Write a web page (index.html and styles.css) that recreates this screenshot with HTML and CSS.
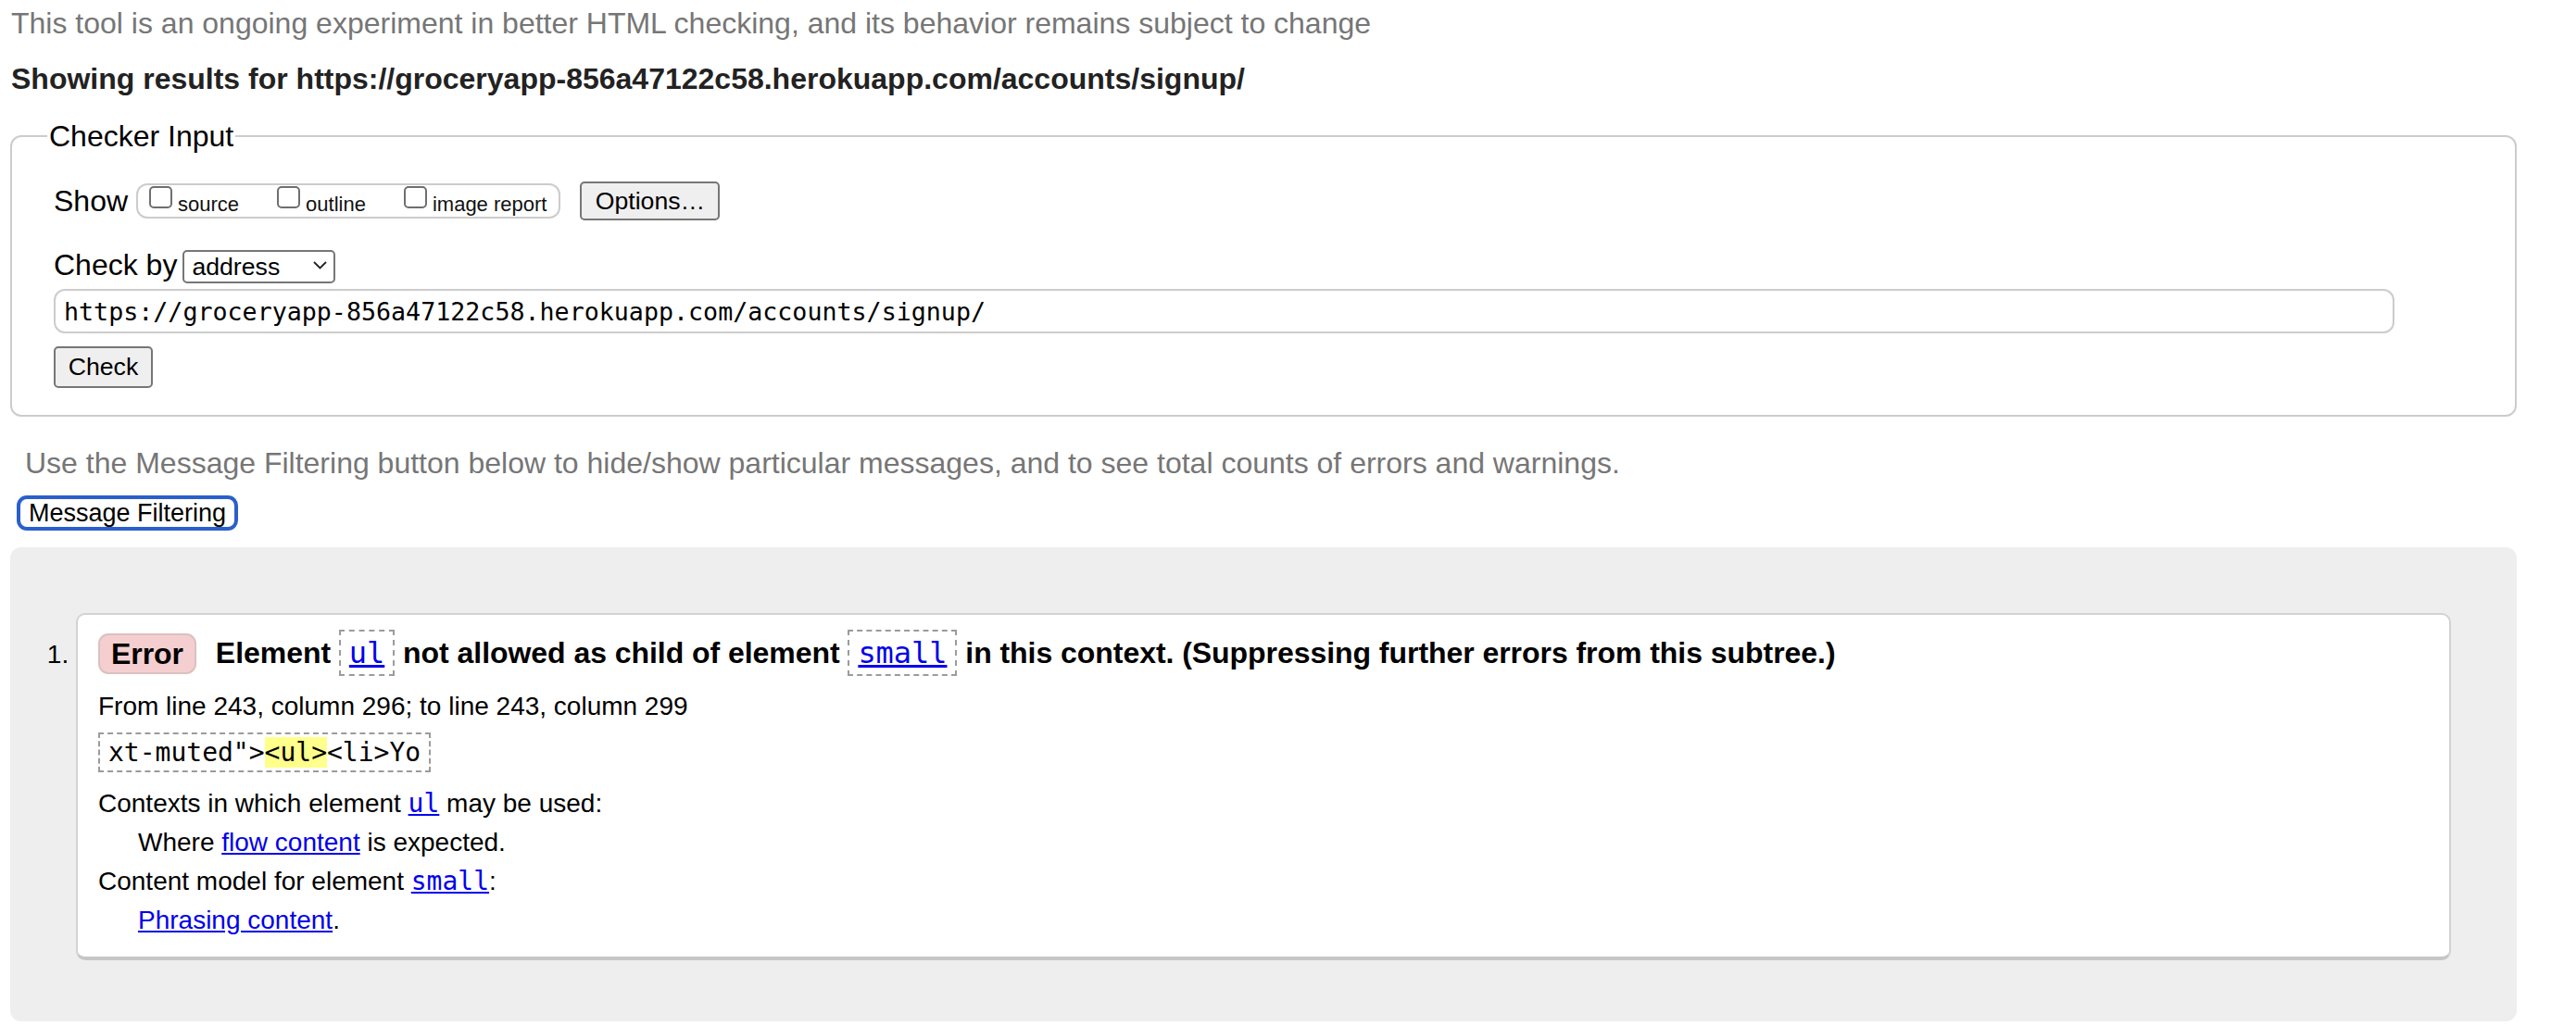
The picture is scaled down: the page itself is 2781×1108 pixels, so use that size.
FILE: index.html
```html
<!DOCTYPE html>
<html lang="en">
<head>
<meta charset="utf-8">
<title>Nu Html Checker</title>
<link rel="stylesheet" href="styles.css">
</head>
<body>
<p class="intro">This tool is an ongoing experiment in better HTML checking, and its behavior remains subject to change</p>
<h2 class="title">Showing results for https://groceryapp-856a47122c58.herokuapp.com/accounts/signup/</h2>
<form class="checker">
  <fieldset class="panel">
    <legend class="panel-legend">Checker Input</legend>
    <div class="row row-show">
      <span class="row-label">Show</span>
      <span class="opts">
        <label class="opt"><input class="cb" type="checkbox"><span>source</span></label>
        <label class="opt"><input class="cb" type="checkbox"><span>outline</span></label>
        <label class="opt"><input class="cb" type="checkbox"><span>image report</span></label>
      </span>
      <button type="button" class="btn btn-options">Options…</button>
    </div>
    <div class="row row-by">
      <span class="row-label">Check by</span>
      <span class="select-wrap">
        <select class="select"><option>address</option></select>
        <svg class="chev" width="15" height="9" viewBox="0 0 15 9"><path d="M1 1 L7.5 7.5 L14 1" fill="none" stroke="#222" stroke-width="1.8"/></svg>
      </span>
    </div>
    <input class="url" type="text" value="https://groceryapp-856a47122c58.herokuapp.com/accounts/signup/">
    <button type="button" class="btn btn-check">Check</button>
  </fieldset>
</form>
<p class="hint">Use the Message Filtering button below to hide/show particular messages, and to see total counts of errors and warnings.</p>
<button type="button" class="btn-filter">Message Filtering</button>
<div class="results">
  <ol class="msgs">
    <li class="msg">
      <p class="msg-head"><span class="badge">Error</span> Element <code class="tok"><a href="#">ul</a></code> not allowed as child of element <code class="tok"><a href="#">small</a></code> in this context. (Suppressing further errors from this subtree.)</p>
      <p class="loc">From line 243, column 296; to line 243, column 299</p>
      <p class="extract"><code>xt-muted"&gt;<b class="hl">&lt;ul&gt;</b>&lt;li&gt;Yo</code></p>
      <dl class="details">
        <dt>Contexts in which element <a href="#"><code>ul</code></a> may be used:</dt>
        <dd>Where <a href="#">flow content</a> is expected.</dd>
        <dt>Content model for element <a href="#"><code>small</code></a>:</dt>
        <dd><a href="#">Phrasing content</a>.</dd>
      </dl>
    </li>
  </ol>
</div>
</body>
</html>
```
FILE: styles.css
```css
* { box-sizing: border-box; }

html { background: #fff; }

body {
  margin: 0;
  padding: 0 0 8px 11px;
  width: 2781px;
  font-family: "Liberation Sans", Arial, Helvetica, sans-serif;
  font-size: 32px;
  color: #000;
}

.intro {
  margin: 5px 0 0 1px;
  line-height: 40px;
  color: #767676;
}

.title {
  margin: 20px 0 0 1px;
  font-size: 32px;
  line-height: 40px;
  font-weight: bold;
  color: #222;
}

.checker { margin: 22px 0 0 0; }

.panel {
  width: 2706px;
  margin: 0;
  min-width: 0;
  border: 2px solid #cccccc;
  border-radius: 12px;
  padding: 28px 45px 29px 45px;
}

.panel-legend {
  margin-left: -7px;
  padding: 0 2px;
  line-height: 40px;
  font-size: 32px;
  color: #000;
}

.row {
  display: flex;
  align-items: center;
}

.row-show { height: 44px; }

.row-by {
  height: 40px;
  margin-top: 27px;
}

.row-label { line-height: 40px; white-space: nowrap; }

.opts {
  display: flex;
  align-items: flex-end;
  flex: none;
  margin-left: 9px;
  height: 38px;
  padding: 0 13px 0 12px;
  border: 2px solid #cccccc;
  border-radius: 12px;
  gap: 41px;
}

.opt {
  display: flex;
  align-items: flex-end;
  flex: none;
  white-space: nowrap;
  font-size: 22px;
  line-height: 26px;
  color: #111;
}

.cb {
  appearance: none;
  -webkit-appearance: none;
  flex: none;
  width: 25px;
  height: 24px;
  margin: 0 6px 9px 0;
  border: 2px solid #6f6f6f;
  border-radius: 5px;
  background: #fff;
}

.btn {
  font-family: "Liberation Sans", Arial, sans-serif;
  font-size: 26.67px;
  color: #000;
  background: #efefef;
  border: 2px solid #767676;
  border-radius: 5px;
  padding: 0 12px;
}

.btn-options {
  flex: none;
  margin-left: 21px;
  width: 151px;
  height: 42px;
}

.select-wrap {
  position: relative;
  display: inline-block;
  margin-left: 6px;
  height: 36px;
}

.select {
  appearance: none;
  -webkit-appearance: none;
  width: 165px;
  height: 36px;
  padding: 0 0 0 8px;
  font-family: "Liberation Sans", Arial, sans-serif;
  font-size: 26.67px;
  color: #000;
  background: #fff;
  border: 2px solid #767676;
  border-radius: 5px;
}

.chev {
  position: absolute;
  left: 141px;
  top: 14px;
  pointer-events: none;
}

.url {
  display: block;
  margin-top: 6px;
  width: 2527px;
  height: 48px;
  padding: 0 9px;
  font-family: "DejaVu Sans Mono", Menlo, monospace;
  font-size: 26.67px;
  color: #000;
  border: 2px solid #cccccc;
  border-radius: 12px;
  background: #fff;
}

.btn-check {
  display: block;
  margin-top: 14px;
  width: 107px;
  height: 45px;
}

.hint {
  margin: 30px 0 0 16px;
  line-height: 40px;
  color: #767676;
}

.btn-filter {
  display: block;
  margin: 15px 0 0 7px;
  height: 38px;
  width: 239px;
  padding: 0;
  font-family: "Liberation Sans", Arial, sans-serif;
  font-size: 27px;
  color: #000;
  background: #fff;
  border: 4px solid #2b5fcb;
  border-radius: 11px;
}

.results {
  margin-top: 18px;
  width: 2706px;
  background: #eeeeee;
  border-radius: 12px;
  padding: 71px 71px 66px 71px;
}

.msgs {
  margin: 0;
  padding: 0;
  list-style: decimal outside;
  font-size: 28px;
}

.msg {
  background: #fff;
  border: 2px solid #d2d2d2;
  border-bottom: 4px solid #c6c6c6;
  border-radius: 10px;
  padding: 15px 22px 21px 22px;
}

.msg-head {
  margin: 0;
  font-size: 32px;
  line-height: 52px;
  font-weight: bold;
  letter-spacing: -0.05px;
}

.badge {
  display: inline-block;
  height: 44px;
  line-height: 40px;
  padding: 0 12px;
  margin-right: 12px;
  background: #f5cfcf;
  border: 2px solid #dcc0c0;
  border-radius: 11px;
  vertical-align: middle;
  position: relative;
  top: -2px;
}

.tok {
  display: inline-block;
  height: 50px;
  line-height: 46px;
  padding: 0 9px;
  border: 2px dashed #9b9b9b;
  vertical-align: middle;
  position: relative;
  top: -3px;
  font-family: "DejaVu Sans Mono", Menlo, monospace;
  font-weight: normal;
  font-size: 32px;
}

a { color: #0000ee; text-decoration: underline; }
a code { font-family: "DejaVu Sans Mono", Menlo, monospace; font-size: 28px; }

.loc {
  margin: 12px 0 0 0;
  line-height: 36px;
}

.extract {
  display: inline-block;
  margin: 10px 0 0 0;
  height: 43px;
  padding: 0 9px;
  border: 2px dashed #9b9b9b;
  line-height: 39px;
}

.extract code {
  font-family: "DejaVu Sans Mono", Menlo, monospace;
  font-size: 28px;
}

.hl {
  font-weight: normal;
  background: #ffff8c;
}

.details {
  margin: 16px 0 0 0;
}

.details dt {
  line-height: 36px;
}

.details dd {
  margin: 6px 0 6px 43px;
  line-height: 36px;
}

.details dd:last-child { margin-bottom: 0; }
```
